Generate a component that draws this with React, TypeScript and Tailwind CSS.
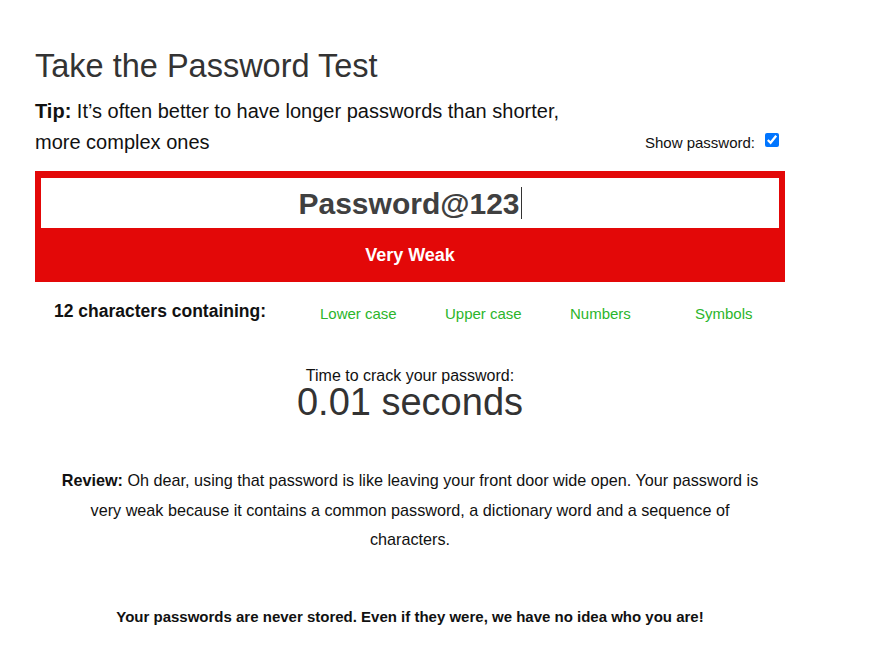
import React from "react";

export default function App() {
  return (
    <div className="min-h-[646px] w-[882px] bg-white text-[#111]" style={{ fontFamily: '"Liberation Sans", Arial, sans-serif' }}>
      <div className="ml-[35px] w-[750px] pt-[44px]">
        <h1 className="text-[32.5px] leading-[44px] text-[#333]">Take the Password Test</h1>
        <div className="mt-[8px] flex items-end justify-between">
          <p className="w-[560px] text-[20px] leading-[31px] text-[#111]">
            <b className="font-bold">Tip:</b> It’s often better to have longer passwords than shorter, more complex ones
          </p>
          <label className="mb-[4px] mr-[6px] flex items-center text-[15px] text-[#111]">
            Show password:
            <input type="checkbox" defaultChecked className="ml-[10px] h-[14px] w-[14px] -translate-y-[3px]" />
          </label>
        </div>
        <div className="mt-[13px] bg-[#e30808] px-[6px] pt-[7px]">
          <div className="flex h-[50px] items-center justify-center bg-white">
            <span className="text-[30px] font-bold text-[#404040]">Password@123</span>
            <span className="ml-[1px] h-[32px] w-[1px] bg-[#333]" />
          </div>
          <div className="flex h-[54px] items-center justify-center text-[18px] font-bold text-white">
            Very Weak
          </div>
        </div>
        <div className="mt-[17px] flex items-start">
          <div className="ml-[19px] w-[266px] shrink-0 whitespace-nowrap text-[17.5px] font-bold leading-[24px]">12 characters containing:</div>
          <div className="mt-[3px] flex whitespace-nowrap text-[15px] leading-[24px] text-[#2bb52b]">
            <span className="w-[125px] shrink-0">Lower case</span>
            <span className="w-[125px] shrink-0">Upper case</span>
            <span className="w-[125px] shrink-0">Numbers</span>
            <span className="shrink-0">Symbols</span>
          </div>
        </div>
        <div className="mt-[40px] text-center">
          <div className="text-[16px] leading-[20px]">Time to crack your password:</div>
          <div className="text-[38px] leading-[33px] text-[#333]">0.01 seconds</div>
        </div>
        <p className="mx-auto mt-[47px] w-[705px] text-center text-[16.2px] leading-[29.5px]">
          <b>Review:</b> Oh dear, using that password is like leaving your front door wide open. Your password is very weak because it contains a common password, a dictionary word and a sequence of characters.
        </p>
        <p className="mt-[51px] text-center text-[15px] font-bold">
          Your passwords are never stored. Even if they were, we have no idea who you are!
        </p>
      </div>
    </div>
  );
}
